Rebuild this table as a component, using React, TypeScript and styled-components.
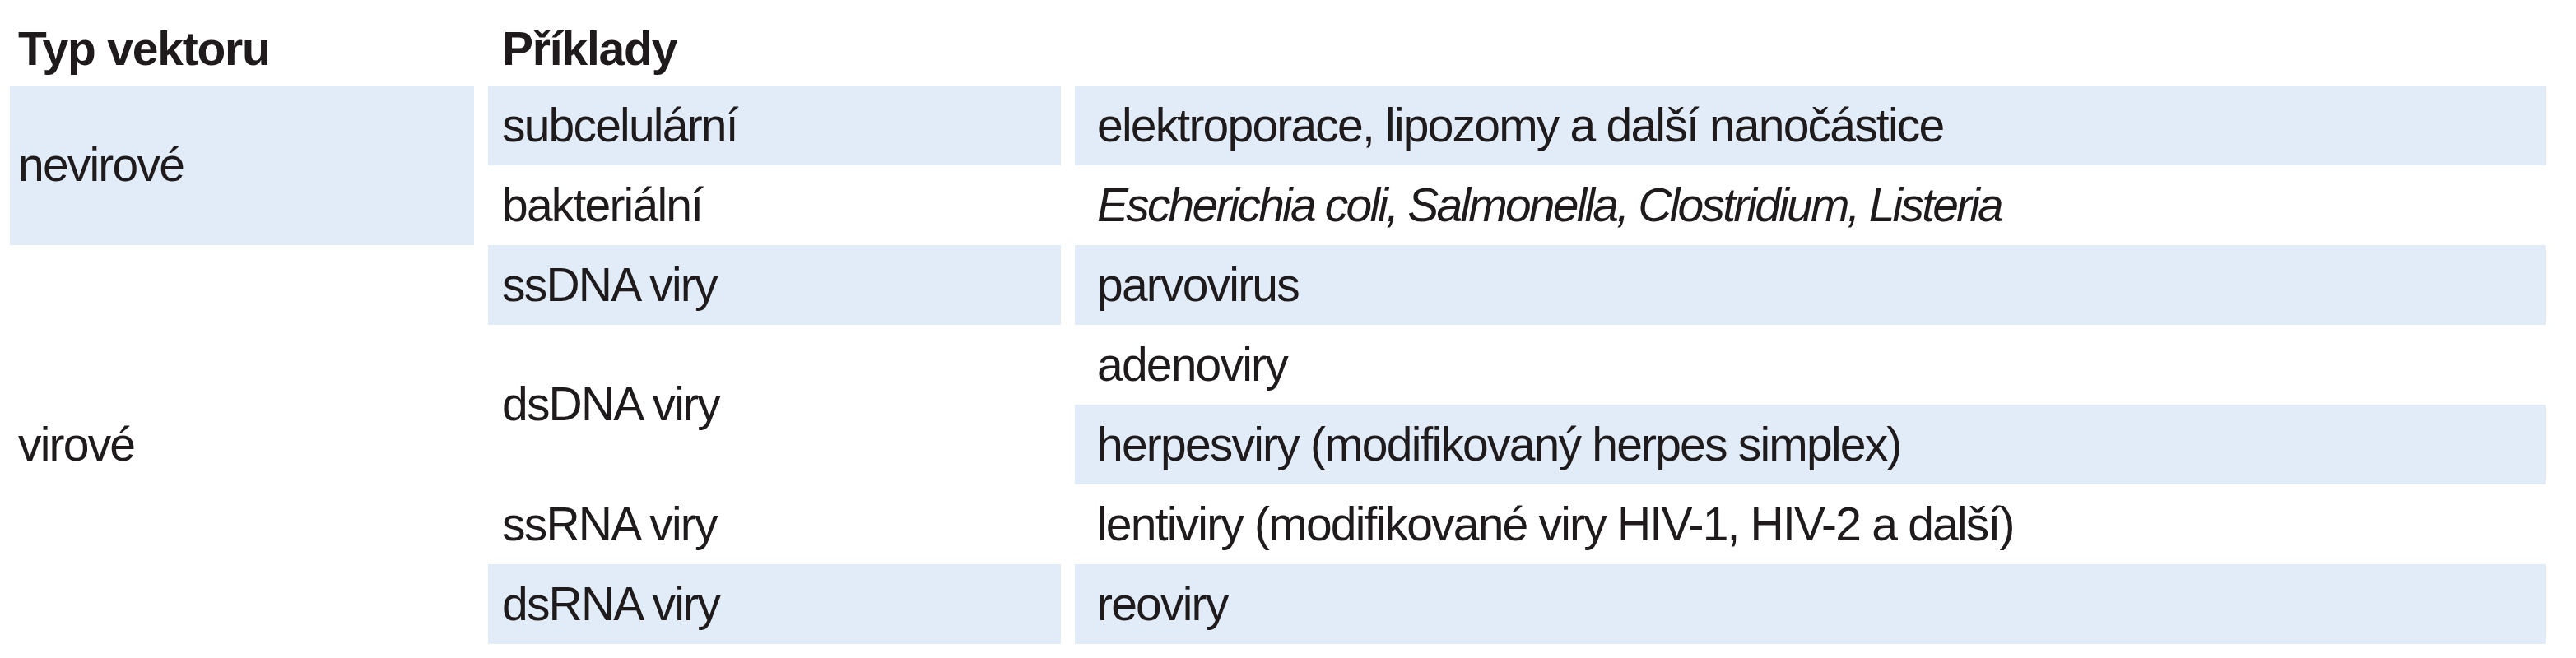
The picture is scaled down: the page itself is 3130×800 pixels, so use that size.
import React from "react";
import styled, { createGlobalStyle } from "styled-components";

const Global = createGlobalStyle`
  html, body { margin: 0; padding: 0; background: #ffffff; }
  body { font-family: "Liberation Sans", Arial, sans-serif; color: #1f1b1c; }
`;

const Table = styled.div`
  display: grid;
  grid-template-columns: 564px 696px 1787px;
  grid-template-rows: 104px repeat(7, 97px);
  column-gap: 17px;
  margin-left: 12px;
  width: 3081px;
`;

const Cell = styled.div<{
  $col: number;
  $row: number;
  $span?: number;
  $colSpan?: number;
  $shaded?: boolean;
  $head?: boolean;
  $indent: number;
  $italic?: boolean;
}>`
  grid-column: ${(p) => p.$col} / span ${(p) => p.$colSpan ?? 1};
  grid-row: ${(p) => p.$row} / span ${(p) => p.$span ?? 1};
  display: flex;
  align-items: center;
  box-sizing: border-box;
  padding-left: ${(p) => p.$indent}px;
  padding-top: ${(p) => (p.$head ? 16 : 0)}px;
  background: ${(p) => (p.$shaded ? "#e1ecf8" : "transparent")};
  font-size: 57px;
  line-height: 1.15;
  font-weight: ${(p) => (p.$head ? 700 : 400)};
  font-style: ${(p) => (p.$italic ? "italic" : "normal")};
  letter-spacing: ${(p) => (p.$head ? -1.2 : p.$italic ? -2.8 : -1.8)}px;
  white-space: nowrap;
`;

const IND = [10, 17, 27];

export default function App() {
  return (
    <>
      <Global />
      <Table>
        <Cell $col={1} $row={1} $head $indent={IND[0]}>Typ vektoru</Cell>
        <Cell $col={2} $row={1} $colSpan={2} $head $indent={IND[1]}>Příklady</Cell>

        <Cell $col={1} $row={2} $span={2} $shaded $indent={IND[0]}>nevirové</Cell>
        <Cell $col={2} $row={2} $shaded $indent={IND[1]}>subcelulární</Cell>
        <Cell $col={3} $row={2} $shaded $indent={IND[2]}>elektroporace, lipozomy a další nanočástice</Cell>
        <Cell $col={2} $row={3} $indent={IND[1]}>bakteriální</Cell>
        <Cell $col={3} $row={3} $italic $indent={IND[2]}>Escherichia coli, Salmonella, Clostridium, Listeria</Cell>

        <Cell $col={1} $row={4} $span={5} $indent={IND[0]}>virové</Cell>
        <Cell $col={2} $row={4} $shaded $indent={IND[1]}>ssDNA viry</Cell>
        <Cell $col={3} $row={4} $shaded $indent={IND[2]}>parvovirus</Cell>
        <Cell $col={2} $row={5} $span={2} $indent={IND[1]}>dsDNA viry</Cell>
        <Cell $col={3} $row={5} $indent={IND[2]}>adenoviry</Cell>
        <Cell $col={3} $row={6} $shaded $indent={IND[2]}>herpesviry (modifikovaný herpes simplex)</Cell>
        <Cell $col={2} $row={7} $indent={IND[1]}>ssRNA viry</Cell>
        <Cell $col={3} $row={7} $indent={IND[2]}>lentiviry (modifikované viry HIV-1, HIV-2 a další)</Cell>
        <Cell $col={2} $row={8} $shaded $indent={IND[1]}>dsRNA viry</Cell>
        <Cell $col={3} $row={8} $shaded $indent={IND[2]}>reoviry</Cell>
      </Table>
    </>
  );
}
